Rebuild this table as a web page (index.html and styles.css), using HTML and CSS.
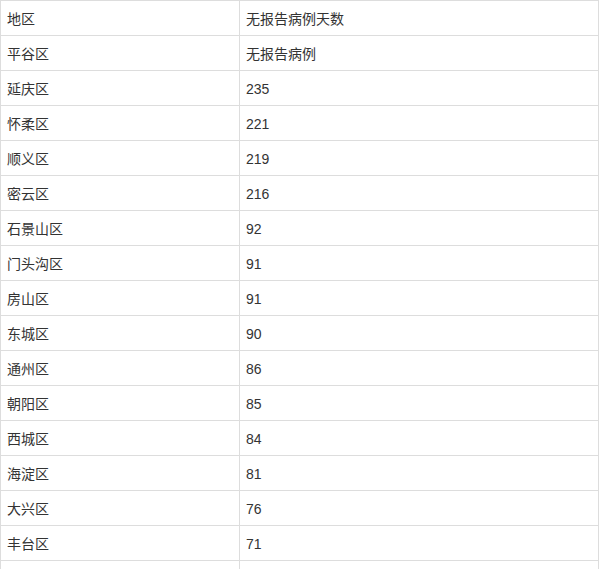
FILE: index.html
```html
<!DOCTYPE html>
<html lang="zh">
<head>
<meta charset="utf-8">
<link rel="stylesheet" href="styles.css">
</head>
<body>
<table class="data">
  <tbody>
    <tr><td class="c1">地区</td><td class="c2">无报告病例天数</td></tr>
    <tr><td class="c1">平谷区</td><td class="c2">无报告病例</td></tr>
    <tr><td class="c1">延庆区</td><td class="c2">235</td></tr>
    <tr><td class="c1">怀柔区</td><td class="c2">221</td></tr>
    <tr><td class="c1">顺义区</td><td class="c2">219</td></tr>
    <tr><td class="c1">密云区</td><td class="c2">216</td></tr>
    <tr><td class="c1">石景山区</td><td class="c2">92</td></tr>
    <tr><td class="c1">门头沟区</td><td class="c2">91</td></tr>
    <tr><td class="c1">房山区</td><td class="c2">91</td></tr>
    <tr><td class="c1">东城区</td><td class="c2">90</td></tr>
    <tr><td class="c1">通州区</td><td class="c2">86</td></tr>
    <tr><td class="c1">朝阳区</td><td class="c2">85</td></tr>
    <tr><td class="c1">西城区</td><td class="c2">84</td></tr>
    <tr><td class="c1">海淀区</td><td class="c2">81</td></tr>
    <tr><td class="c1">大兴区</td><td class="c2">76</td></tr>
    <tr><td class="c1">丰台区</td><td class="c2">71</td></tr>
    <tr><td class="c1"></td><td class="c2"></td></tr>
  </tbody>
</table>
</body>
</html>
```

FILE: styles.css
```css
html, body {
  margin: 0;
  padding: 0;
  background: #ffffff;
}
body {
  font-family: "Liberation Sans", "Noto Sans CJK SC", sans-serif;
  font-size: 14px;
  color: #333333;
}
.data {
  border-collapse: collapse;
  width: 599px;
  table-layout: fixed;
}
.data td {
  border: 1px solid #dddddd;
  height: 35px;
  padding: 1px 6px 0;
  box-sizing: border-box;
  vertical-align: middle;
  line-height: 20px;
}
.data td.c1 {
  width: 239px;
}
```
